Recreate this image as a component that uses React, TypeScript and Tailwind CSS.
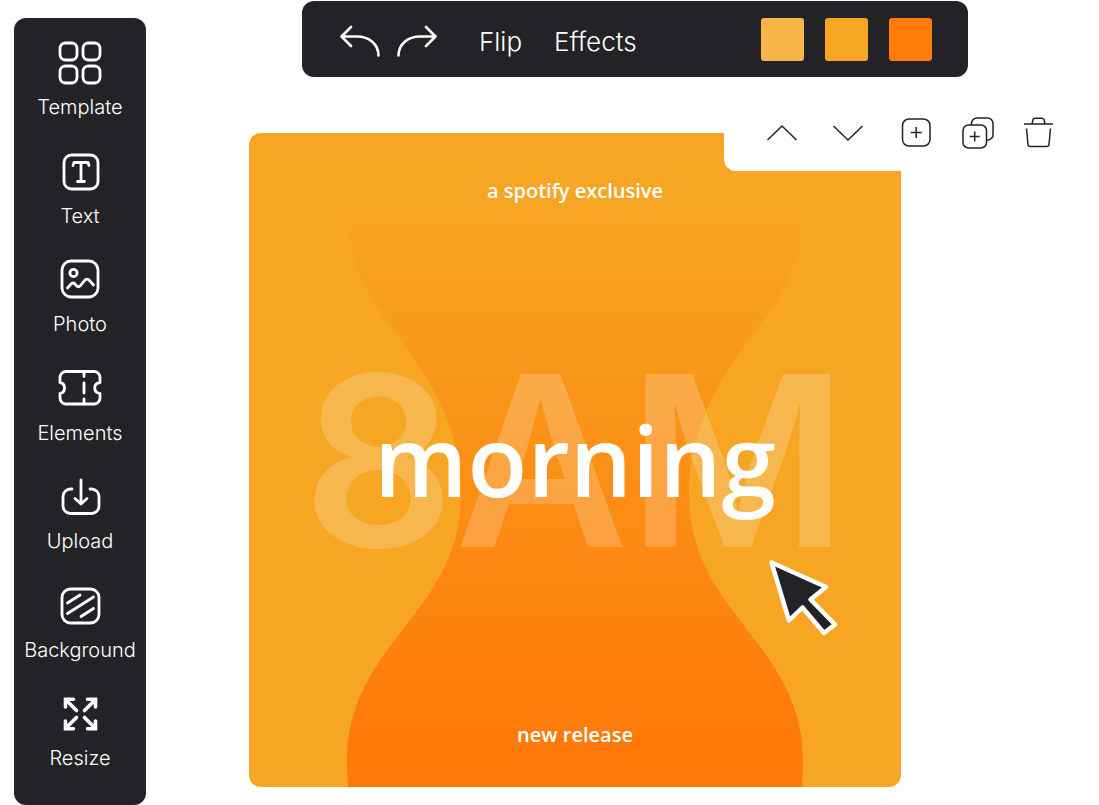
import type { ReactNode } from 'react'

type Tool = {
    name: string
    icon: ReactNode
}

const TOOLS: Tool[] = [
    {
        name: 'Template',
        icon: (
            <>
                <rect x="2" y="2" width="17" height="17" rx="5.5" />
                <rect x="25" y="2" width="17" height="17" rx="5.5" />
                <rect x="2" y="25" width="17" height="17" rx="5.5" />
                <rect x="25" y="25" width="17" height="17" rx="5.5" />
            </>
        )
    },
    {
        name: 'Text',
        icon: (
            <>
                <rect x="6" y="5" width="34" height="34" rx="7.5" />
                <path d="M15 15.5 16 12.5H30L31 15.5M23 13V31.5M19.5 31.5H26.5" />
            </>
        )
    },
    {
        name: 'Photo',
        icon: (
            <>
                <rect x="4" y="3" width="36" height="36" rx="9" />
                <circle cx="15.5" cy="15" r="3.6" />
                <path d="M9.5 30 13 26Q15 24 17 26L18.5 27.8Q20.5 30 22.5 27.5L26.5 22.7Q29 19.8 31.5 22.5L35.5 27" />
            </>
        )
    },
    {
        name: 'Elements',
        icon: (
            <>
                <path d="M8 4.5H36A6 6 0 0 1 42 10.5V15.5C35 16.5 35 25.5 42 26.5V31A6 6 0 0 1 36 37H8A6 6 0 0 1 2 31V26.5C8 25.5 8 16.5 2 15.5V10.5A6 6 0 0 1 8 4.5Z" />
                <path d="M26 5V9.5M26 16V26M26 32V37" />
            </>
        )
    },
    {
        name: 'Upload',
        icon: (
            <>
                <path d="M14 14H12.5A7.5 7.5 0 0 0 5 21.5V31A7.5 7.5 0 0 0 12.5 38.5H33.5A7.5 7.5 0 0 0 41 31V21.5A7.5 7.5 0 0 0 33.5 14H32" />
                <path d="M23 5V29M17 23.5 23 29 29 23.5" />
            </>
        )
    },
    {
        name: 'Background',
        icon: (
            <>
                <rect x="4" y="5" width="37" height="34" rx="8.5" />
                <path d="M9.5 19 22 11M9.5 29.5 35.5 13M23 32.5 35.5 24.5" />
            </>
        )
    },
    {
        name: 'Resize',
        icon: (
            <g strokeWidth="3.6" strokeLinejoin="miter">
                <path d="M18.5 18.5 8 8M7.5 15V7.2H15.5" />
                <path d="M26.5 18.5 37 8M37.5 15V7.2H29.5" />
                <path d="M18.5 25.5 8 36M7.5 29V36.8H15.5" />
                <path d="M26.5 25.5 37 36M37.5 29V36.8H29.5" />
            </g>
        )
    }
]

const SWATCHES = [
    { name: 'Light orange', className: 'bg-[#fab54a]' },
    { name: 'Orange', className: 'bg-[#f6a623]' },
    { name: 'Dark orange', className: 'bg-[#ff7b0c]' }
]

function Sidebar() {
    return (
        <aside className="mt-[18px] ml-3.5 w-[132px] shrink-0 rounded-xl bg-[#232227] pt-[23px] pb-[35px]">
            <nav className="flex h-full flex-col justify-between">
                {TOOLS.map(tool => (
                    <button key={tool.name} className="flex flex-col items-center gap-2.5 text-xl leading-6 font-light text-white">
                        <svg
                            className="size-11"
                            viewBox="0 0 44 44"
                            fill="none"
                            stroke="currentColor"
                            strokeWidth="2.8"
                            strokeLinecap="round"
                            strokeLinejoin="round"
                        >
                            {tool.icon}
                        </svg>
                        {tool.name}
                    </button>
                ))}
            </nav>
        </aside>
    )
}

function TopBar() {
    return (
        <header className="mt-px mr-[131px] ml-[156px] flex h-19 items-center rounded-xl bg-[#232227] pr-9 pl-[38px] text-[26px] leading-8 font-light text-white">
            <div className="flex gap-[17px] pt-1">
                <button aria-label="Undo">
                    <svg className="h-8 w-10" viewBox="0 0 40 32" fill="none" stroke="currentColor" strokeWidth="2.6" strokeLinecap="round" strokeLinejoin="round">
                        <path d="M11 2 1.5 11.5 11 21M2 11.5H17C29 11.5 38.5 19 38.5 30.5" />
                    </svg>
                </button>
                <button aria-label="Redo">
                    <svg className="h-8 w-10" viewBox="0 0 40 32" fill="none" stroke="currentColor" strokeWidth="2.6" strokeLinecap="round" strokeLinejoin="round">
                        <path d="M29 2 38.5 11.5 29 21M38 11.5H23C11 11.5 1.5 19 1.5 30.5" />
                    </svg>
                </button>
            </div>
            <div className="ml-[42px] flex gap-8 pt-1.5">
                <button>Flip</button>
                <button>Effects</button>
            </div>
            <div className="ml-auto flex gap-[21px]">
                {SWATCHES.map(swatch => (
                    <button key={swatch.name} aria-label={swatch.name} className={`size-[43px] rounded-[3px] ${swatch.className}`} />
                ))}
            </div>
        </header>
    )
}

function LayerActions() {
    return (
        <div className="absolute -top-[38px] right-0 flex h-19 w-[375px] items-center rounded-bl-xl bg-white pl-[42px] text-[#232227]">
            <div className="flex gap-[34px]">
                <button aria-label="Move up">
                    <svg className="size-8" viewBox="0 0 32 32" fill="none" stroke="currentColor" strokeWidth="1.5">
                        <path d="M1.5 23 16 9 30.5 23" />
                    </svg>
                </button>
                <button aria-label="Move down">
                    <svg className="size-8" viewBox="0 0 32 32" fill="none" stroke="currentColor" strokeWidth="1.5">
                        <path d="M1.5 9 16 23 30.5 9" />
                    </svg>
                </button>
            </div>
            <div className="ml-9 flex gap-[30px]">
                <button aria-label="Add page">
                    <svg className="size-8" viewBox="0 0 32 32" fill="none" stroke="currentColor" strokeWidth="1.5">
                        <rect x="2.5" y="2" width="27.5" height="27" rx="6.5" />
                        <path d="M16.2 10V21M10.7 15.5H21.7" />
                    </svg>
                </button>
                <button aria-label="Duplicate page">
                    <svg className="size-8" viewBox="0 0 32 32" fill="none" stroke="currentColor" strokeWidth="1.5">
                        <rect x="1" y="8" width="23.5" height="23" rx="5.5" />
                        <path d="M9.5 8V6.5A5.5 5.5 0 0 1 15 1H25.5A5.5 5.5 0 0 1 31 6.500V17A5.5 5.5 0 0 1 25.5 23H24.5" />
                        <path d="M12.7 14.5V24.5M7.700 19.5H17.7" />
                    </svg>
                </button>
                <button aria-label="Delete">
                    <svg className="size-8" viewBox="0 0 32 32" fill="none" stroke="currentColor" strokeWidth="1.5" strokeLinejoin="round">
                        <path d="M0 7H29M8 7 9 2.500Q9.500 1.300 11 1.3H18Q19.500 1.3 20 2.500L21 7" />
                        <path d="M2.500 11.500 4 27.500Q4.300 29.500 6.300 29.500H22.700Q24.700 29.500 25 27.500L26.500 11.500" />
                    </svg>
                </button>
            </div>
        </div>
    )
}

function Poster() {
    return (
        <article className="relative mr-[198px] ml-[103px] flex h-[654px] flex-col items-center justify-between overflow-hidden rounded-xl bg-[#f6a623] pt-11 pb-[38px] font-['Open_Sans',sans-serif] text-xl leading-7 font-semibold text-white">
            <svg className="absolute inset-0 size-full" viewBox="0 0 652 654" preserveAspectRatio="none">
                <defs>
                    <linearGradient id="glow" gradientUnits="userSpaceOnUse" x1="0" y1="66" x2="0" y2="600">
                        <stop offset="0" stopColor="#f6a623" />
                        <stop offset="1" stopColor="#ff7a0b" />
                    </linearGradient>
                </defs>
                <path
                    fill="url(#glow)"
                    d="M101 60Q99 75 99 90C99 185 212 230 212 362C212 480 98 510 98 628Q98 640 99 654H553Q554 640 554 628C554 510 440 480 440 362C440 230 553 185 553 90Q553 75 551 60Z"
                />
            </svg>
            {/* Big title with the time behind it */}
            <div className="absolute inset-0 flex items-center justify-center font-['Inter',sans-serif] text-[238px] leading-none font-[560] text-white/20">
                8AM
            </div>
            <p className="relative">a spotify exclusive</p>
            <h1 className="relative pb-2 text-[98px] leading-[132px]">morning</h1>
            <p className="relative">new release</p>
            <svg className="absolute top-[424px] left-[79%] size-20" viewBox="0 0 80 80" fill="#232227" stroke="#fff" strokeWidth="4.5" strokeLinejoin="round">
                <path d="M7.500 5.500 62 30 46.500 42.500 71 67.500 60 76 38.500 50.500 25 63.500Z" />
            </svg>
        </article>
    )
}

export default function App() {
    return (
        <div className="flex min-h-screen bg-white font-['Inter',sans-serif]">
            <Sidebar />
            <main className="min-w-0 flex-1">
                <TopBar />
                <section className="relative mt-14">
                    <Poster />
                    <LayerActions />
                </section>
            </main>
        </div>
    )
}
